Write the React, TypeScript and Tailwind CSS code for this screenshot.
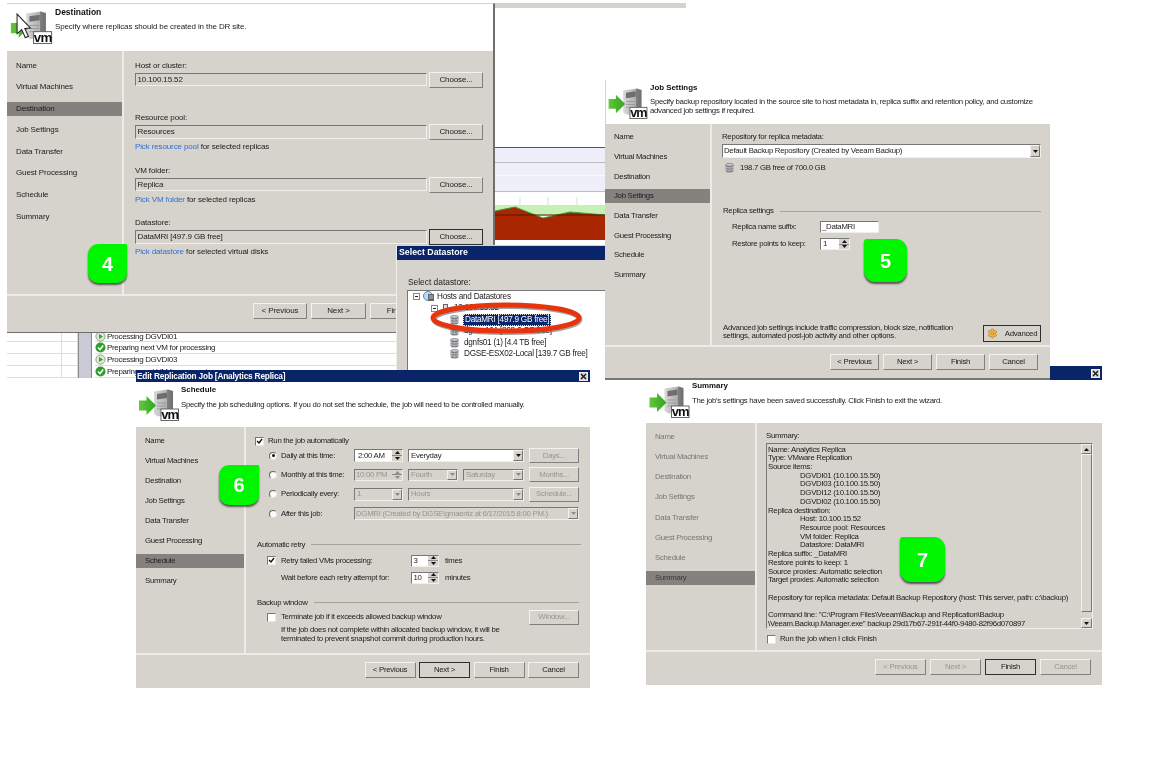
import React from "react";
import { Settings } from "lucide-react";

const NAV = ["Name", "Virtual Machines", "Destination", "Job Settings", "Data Transfer", "Guest Processing", "Schedule", "Summary"];

function VmIcon({ w, h, cursor }: { w: number; h: number; cursor?: boolean }) {
  return (
    <svg width={w} height={h} viewBox="0 0 40 33" className="shrink-0">
      <defs>
        <linearGradient id="srv" x1="0" x2="1" y1="0" y2="0">
          <stop offset="0" stopColor="#d8d8d8" />
          <stop offset="0.68" stopColor="#b0b0b0" />
          <stop offset="0.7" stopColor="#808080" />
          <stop offset="1" stopColor="#6e6e6e" />
        </linearGradient>
        <linearGradient id="arr" x1="0" x2="1" y1="0" y2="0">
          <stop offset="0" stopColor="#63c73c" />
          <stop offset="1" stopColor="#2fa61e" />
        </linearGradient>
      </defs>
      <path d="M15 3.5 L29 1.5 L34 3 V26 L19 28.5 L15 26z" fill="url(#srv)" />
      <path d="M18 6 L28 4.5 V10 L18 11.5z" fill="#6e6e6e" />
      <path d="M18 15h9M18 18h9M18 21h9" stroke="#8f8f8f" strokeWidth="0.8" />
      <path d="M0 12.5h7.5V8L17 17.5 7.5 27v-4.5H0z" fill="url(#arr)" />
      <rect x="22" y="21" width="17.5" height="11.5" fill="#fff" stroke="#666" strokeWidth="1" />
      <text x="30.8" y="30.6" textAnchor="middle" fontSize="13" fontWeight="700" fontFamily="Liberation Sans" fill="#111" letterSpacing="-0.8">vm</text>
      {cursor && (
        <path d="M6 4 L6 23 L10.5 19 L14 27 L17 25.5 L13.5 18 L19 17.5z" fill="#fff" stroke="#222" strokeWidth="1" />
      )}
    </svg>
  );
}

function Db({ className }: { className?: string }) {
  return (
    <svg width="9" height="10" viewBox="0 0 9 10" className={className}>
      <rect x="0.5" y="1" width="8" height="8.5" rx="2" fill="#8d9296" />
      <ellipse cx="4.5" cy="1.8" rx="4" ry="1.4" fill="#c8ccd0" stroke="#555" strokeWidth="0.5" />
      <path d="M1 4.2c2 1 5 1 7 0M1 6.6c2 1 5 1 7 0" stroke="#eee" strokeWidth="0.7" fill="none" />
      <path d="M3 3v6M6 3v6" stroke="#5a5f63" strokeWidth="0.5" />
    </svg>
  );
}

function Btn({ children, w, h, primary, disabled, className }: { children: React.ReactNode; w: string; h: string; primary?: boolean; disabled?: boolean; className?: string }) {
  return (
    <div
      className={`flex items-center justify-center shrink-0 whitespace-nowrap ${w} ${h} ${className ?? ""} ${
        primary
          ? "border-[1.5px] border-[#2f2f2f]"
          : "border-[1.5px] border-t-[#f4f2ee] border-l-[#f4f2ee] border-r-[#7f7f7f] border-b-[#7f7f7f]"
      } ${disabled ? "text-[#98958f]" : "text-[#1c1c1c]"}`}
    >
      {children}
    </div>
  );
}

function Nav({ active, w, pt, gap, dim }: { active: string; w: string; pt: string; gap: string; dim?: boolean }) {
  return (
    <div className={`shrink-0 flex flex-col border-r-2 border-[#ecebe7] ${w} ${pt} ${gap}`}>
      {NAV.map((n) => (
        <div
          key={n}
          className={`h-[14px] flex items-center pl-[9px] ${n === active ? "bg-[#84817f]" : ""} ${dim && n !== active ? "text-[#7a7774]" : dim ? "text-[#3a3a3a]" : "text-[#1c1c1c]"}`}
        >
          {n}
        </div>
      ))}
    </div>
  );
}

function Header({ h, title, desc, mt, pt, iw, ih, cursor, gap, ts, className }: { h: string; title: string; desc: React.ReactNode; mt: string; pt: string; iw: number; ih: number; cursor?: boolean; gap: string; ts: string; className?: string }) {
  return (
    <div className={`bg-white flex shrink-0 ${h} ${className ?? ""}`}>
      <div className={`ml-[3px] ${mt}`}>
        <VmIcon w={iw} h={ih} cursor={cursor} />
      </div>
      <div className={`ml-[2px] ${pt}`}>
        <div className={`font-bold h-[10px] leading-[10px] text-[#111] tracking-normal ${ts}`}>{title}</div>
        <div className={`leading-[8.7px] text-[#1c1c1c] whitespace-nowrap ${gap}`}>{desc}</div>
      </div>
    </div>
  );
}

function Inset({ className, children }: { className?: string; children?: React.ReactNode }) {
  return (
    <div className={`border-[1.5px] border-t-[#777] border-l-[#777] border-r-[#f0efeb] border-b-[#f0efeb] flex items-center shrink-0 overflow-hidden whitespace-nowrap ${className ?? ""}`}>
      {children}
    </div>
  );
}

function Arrow({ up, dim }: { up?: boolean; dim?: boolean }) {
  return (
    <svg width="5" height="3" viewBox="0 0 5 3">
      <path d={up ? "M2.5 0L5 3H0z" : "M0 0h5L2.5 3z"} fill={dim ? "#8a8a8a" : "#111"} />
    </svg>
  );
}

function Spin({ dim }: { dim?: boolean }) {
  return (
    <div className="ml-auto w-[10px] h-full flex flex-col shrink-0 bg-[#d6d2cc]">
      <div className="flex-1 flex items-center justify-center border-b border-[#888]"><Arrow up dim={dim} /></div>
      <div className="flex-1 flex items-center justify-center"><Arrow dim={dim} /></div>
    </div>
  );
}

function Drop({ dim }: { dim?: boolean }) {
  return (
    <div className="ml-auto w-[10px] h-full flex items-center justify-center shrink-0 bg-[#d6d2cc] border border-t-[#f4f2ee] border-l-[#f4f2ee] border-r-[#777] border-b-[#777]">
      <Arrow dim={dim} />
    </div>
  );
}

function Check({ on, className }: { on?: boolean; className?: string }) {
  return (
    <div className={`w-[9px] h-[9px] bg-white border-[1.5px] border-t-[#777] border-l-[#777] border-r-[#e8e6e2] border-b-[#e8e6e2] shrink-0 ${className ?? ""}`}>
      {on && (
        <svg viewBox="0 0 7 7" className="w-full h-full">
          <path d="M1 3l2 2 3-4" stroke="#111" strokeWidth="1.4" fill="none" />
        </svg>
      )}
    </div>
  );
}

function Radio({ on }: { on?: boolean }) {
  return (
    <div className="w-[8px] h-[8px] rounded-full bg-[#fbfbfb] border border-t-[#666] border-l-[#666] border-r-[#e8e6e2] border-b-[#e8e6e2] flex items-center justify-center shrink-0 mr-[4px]">
      {on && <div className="w-[3px] h-[3px] rounded-full bg-[#111]" />}
    </div>
  );
}

function Field({ label, value, link, rest, primary }: { label: string; value: string; link?: string; rest?: string; primary?: boolean }) {
  return (
    <div className="h-[52.5px]">
      <div className="h-[13px] leading-[13px]">{label}</div>
      <div className="flex items-center gap-[2px]">
        <Inset className="w-[292px] h-[13.5px] pl-[1.5px]">{value}</Inset>
        <Btn w="w-[54px]" h="h-[16px]" primary={primary}>Choose...</Btn>
      </div>
      {link && (
        <div className="mt-[2px] h-[10px] leading-[10px] whitespace-nowrap">
          <span className="text-[#2f6fd8]">{link}</span> {rest}
        </div>
      )}
    </div>
  );
}

function Badge({ n, className }: { n: string; className: string }) {
  return (
    <div className={`absolute bg-[#00f500] text-white font-bold text-[20px] tracking-normal flex items-center justify-center shadow-[0_2px_2px_rgba(0,0,0,0.6)] ${className}`}>
      {n}
    </div>
  );
}

function Footer({ h, pt, pr, gap, children }: { h: string; pt: string; pr: string; gap: string; children: React.ReactNode }) {
  return <div className={`flex justify-end border-t-2 border-[#ecebe7] shrink-0 ${h} ${pt} ${pr} ${gap}`}>{children}</div>;
}

function Section({ label, className }: { label: string; className: string }) {
  return (
    <div className={`flex items-center h-[12px] gap-[6px] whitespace-nowrap ${className}`}>
      <span>{label}</span>
      <div className="flex-1 h-px bg-[#a5a29d]" />
    </div>
  );
}

function Close({ className }: { className?: string }) {
  return (
    <div className={`w-[9px] h-[9px] bg-[#d6d2cc] border border-[#eee] flex items-center justify-center ${className ?? ""}`}>
      <svg viewBox="0 0 7 7" className="w-[7px] h-[7px]">
        <path d="M1 1l5 5M6 1L1 6" stroke="#111" strokeWidth="1.2" />
      </svg>
    </div>
  );
}

function LogIcon({ ok }: { ok?: boolean }) {
  return (
    <svg width="11" height="11" viewBox="0 0 11 11" className="shrink-0 mr-[1px]">
      {ok ? (
        <>
          <circle cx="5.5" cy="5.5" r="5" fill="#2e9e2e" />
          <path d="M3 5.5l2 2 3.2-4" stroke="#fff" strokeWidth="1.6" fill="none" />
        </>
      ) : (
        <>
          <circle cx="5.5" cy="5.5" r="4.6" fill="#dfe7d6" stroke="#8aa884" />
          <path d="M4 3l4 2.5L4 8z" fill="#3f9e35" />
        </>
      )}
    </svg>
  );
}

function MinusBox() {
  return (
    <div className="w-[7px] h-[7px] border border-[#888] bg-white flex items-center justify-center shrink-0">
      <div className="w-[3px] h-px bg-[#222]" />
    </div>
  );
}

function TreeRow({ pl, children }: { pl: string; children: React.ReactNode }) {
  return <div className={`h-[11.5px] flex items-center whitespace-nowrap ${pl}`}>{children}</div>;
}

function GridCol({ className }: { className: string }) {
  return (
    <div className={`flex flex-col shrink-0 ${className}`}>
      <div className="h-[10px] border-b border-[#ddd]" />
      <div className="h-[12px] border-b border-[#ddd]" />
      <div className="h-[12px] border-b border-[#ddd]" />
      <div className="h-[12px] border-b border-[#ddd]" />
    </div>
  );
}

const SUMMARY: [string, boolean][] = [
  ["Name: Analytics Replica", false],
  ["Type: VMware Replication", false],
  ["Source items:", false],
  ["DGVDI01 (10.100.15.50)", true],
  ["DGVDI03 (10.100.15.50)", true],
  ["DGVDI12 (10.100.15.50)", true],
  ["DGVDI02 (10.100.15.50)", true],
  ["Replica destination:", false],
  ["Host: 10.100.15.52", true],
  ["Resource pool: Resources", true],
  ["VM folder: Replica", true],
  ["Datastore: DataMRI", true],
  ["Replica suffix: _DataMRI", false],
  ["Restore points to keep: 1", false],
  ["Source proxies: Automatic selection", false],
  ["Target proxies: Automatic selection", false],
  ["\u00a0", false],
  ["Repository for replica metadata: Default Backup Repository (host: This server, path: c:\\backup)", false],
  ["\u00a0", false],
  ["Command line: \"C:\\Program Files\\Veeam\\Backup and Replication\\Backup", false],
  ["\\Veeam.Backup.Manager.exe\" backup 29d17b67-291f-44f0-9480-82f96d070897", false],
];

export default function App() {
  return (
    <div className="relative w-[1153px] h-[779px] bg-white overflow-hidden font-['Liberation_Sans',sans-serif] text-[8.4px] text-[#1c1c1c] blur-[0.4px]">
      {/* strip of a window behind everything */}
      <div className="absolute left-[495px] top-[3px] w-[191px] h-[5px] bg-[#d6d2cc]" />

      {/* chart of the window behind */}
      <svg className="absolute left-[495px] top-[147px]" width="110" height="96" viewBox="0 0 110 96">
        <rect width="110" height="44" fill="#eeeff8" />
        <rect width="110" height="1" fill="#555" />
        <rect y="15" width="110" height="1" fill="#bbbbbb" />
        <rect y="28" width="110" height="1" fill="#fafafa" />
        <rect y="44" width="110" height="1" fill="#bcbdc6" />
        <rect y="50" width="110" height="17" fill="#fff" />
        <path d="M25 50v17M53 50v17M82 50v17" stroke="#e4f5dc" strokeWidth="2" />
        <rect y="58" width="110" height="11" fill="#c7f0b6" />
        <path d="M0 64 L20 60 L48 71 L75 65 L110 68 V93 H0z" fill="#a82700" />
        <path d="M0 64 L20 60 L48 71 L75 65 L110 68" stroke="#3aa040" strokeWidth="1" fill="none" />
        <rect y="67.5" width="110" height="1" fill="#5c1400" />
      </svg>

      {/* log table behind */}
      <div className="absolute left-[7px] top-[332px] w-[389px] h-[46px] flex overflow-hidden">
        <GridCol className="w-[55px] border-r border-[#ddd]" />
        <GridCol className="w-[16px] border-r border-[#ddd]" />
        <div className="w-[13px] shrink-0 bg-[#c9cad6] border-l border-[#888]" />
        <div className="flex-1 flex flex-col border-l border-[#888] text-[8px] tracking-[-0.33px] text-[#222] pl-[3px] whitespace-nowrap">
          <div className="h-[10px] flex items-center border-b border-[#ddd]"><LogIcon />Processing DGVDI01</div>
          <div className="h-[12px] flex items-center border-b border-[#ddd]"><LogIcon ok />Preparing next VM for processing</div>
          <div className="h-[12px] flex items-center border-b border-[#ddd]"><LogIcon />Processing DGVDI03</div>
          <div className="h-[12px] flex items-center border-b border-[#ddd]"><LogIcon ok />Preparing next VM for processing</div>
        </div>
      </div>

      {/* step 4 */}
      <div className="absolute left-[7px] top-[3px] w-[488px] h-[330px] flex flex-col bg-[#d6d2cc] border-t border-[#d6d2cc] border-r-2 border-r-[#6f6f6f] border-b border-b-[#6f6f6f] text-[8px] tracking-[-0.125px]">
        <Header h="h-[47px]" title="Destination" ts="text-[8.5px]" desc="Specify where replicas should be created in the DR site." mt="mt-[6px]" pt="pt-[3px]" iw={43} ih={34} cursor gap="mt-[5.5px]" />
        <div className="flex flex-1 min-h-0">
          <Nav active="Destination" w="w-[117px]" pt="pt-[7.5px]" gap="gap-[7.6px]" />
          <div className="pl-[11px] pt-[7.5px] flex-1">
            <Field label="Host or cluster:" value="10.100.15.52" />
            <Field label="Resource pool:" value="Resources" link="Pick resource pool" rest="for selected replicas" />
            <Field label="VM folder:" value="Replica" link="Pick VM folder" rest="for selected replicas" />
            <Field label="Datastore:" value="DataMRI [497.9 GB free]" link="Pick datastore" rest="for selected virtual disks" primary />
          </div>
        </div>
        <Footer h="h-[38px]" pt="pt-[7px]" pr="pr-[11px]" gap="gap-[4px]">
          <Btn w="w-[54px]" h="h-[16px]">&lt; Previous</Btn>
          <Btn w="w-[55px]" h="h-[16px]">Next &gt;</Btn>
          <Btn w="w-[54px]" h="h-[16px]">Finish</Btn>
          <Btn w="w-[54px]" h="h-[16px]">Cancel</Btn>
        </Footer>
        <Badge n="4" className="left-[81px] top-[240px] w-[39px] h-[39px] rounded-tl-[10px] rounded-bl-[10px] rounded-br-[10px] rounded-tr-[1px]" />
      </div>

      {/* select datastore */}
      <div className="absolute left-[396px] top-[245px] w-[209px] h-[133px] bg-[#d6d2cc] border-l border-[#f0efeb] flex flex-col">
        <div className="h-[15px] bg-[#0a246a] text-white font-bold text-[8.8px] flex items-center pl-[2px] shrink-0 border-t border-[#d6d2cc]">Select Datastore</div>
        <div className="mt-[16px] h-[12px] leading-[12px] pl-[11px]">Select datastore:</div>
        <div className="mt-[2px] ml-[10px] flex-1 bg-white border-[1.5px] border-r-0 border-b-0 border-t-[#777] border-l-[#777] overflow-hidden pl-[5px] text-[#1c1c1c] text-[8.2px] tracking-[-0.25px]">
          <TreeRow pl="pl-0">
            <MinusBox />
            <svg width="12" height="11" viewBox="0 0 12 11" className="ml-[3px] mr-[2px] shrink-0">
              <circle cx="5" cy="5" r="4.5" fill="#bcd9f2" stroke="#4f8ac0" />
              <rect x="5" y="3" width="6" height="7" fill="#666" />
              <path d="M6 5h4M6 7h4" stroke="#ddd" strokeWidth="0.7" />
            </svg>
            Hosts and Datastores
          </TreeRow>
          <TreeRow pl="pl-[18px]">
            <MinusBox />
            <div className="w-[5px] h-[9px] bg-[#ddd] border border-[#666] ml-[5px] mr-[6px] shrink-0" />
            10.100.15.52
          </TreeRow>
          <TreeRow pl="pl-[37px]">
            <Db className="mr-[4px] shrink-0" />
            <span className="bg-[#0a246a] text-white px-[1px] border border-dotted border-[#ddd] leading-[10px]">DataMRI [497.9 GB free]</span>
          </TreeRow>
          <TreeRow pl="pl-[37px]">
            <Db className="mr-[5px] shrink-0" />
            dgnas101 [868.6 GB free]
          </TreeRow>
          <TreeRow pl="pl-[37px]">
            <Db className="mr-[5px] shrink-0" />
            dgnfs01 (1) [4.4 TB free]
          </TreeRow>
          <TreeRow pl="pl-[37px]">
            <Db className="mr-[5px] shrink-0" />
            DGSE-ESX02-Local [139.7 GB free]
          </TreeRow>
        </div>
      </div>

      {/* red ellipse over the selected datastore */}
      <svg className="absolute left-[428px] top-[298px]" width="158" height="40" viewBox="0 0 158 40">
        <ellipse cx="79" cy="21.5" rx="73" ry="13" fill="none" stroke="#555" strokeOpacity="0.55" strokeWidth="5" />
        <ellipse cx="78" cy="20" rx="73" ry="13" fill="none" stroke="#e8340c" strokeWidth="5" />
      </svg>

      {/* step 5 */}
      <div className="absolute left-[605px] top-[80px] w-[445px] h-[300px] flex flex-col bg-[#d6d2cc] border-b-2 border-[#777] text-[7.8px] tracking-[-0.28px]">
        <Header
          h="h-[44px]"
          title="Job Settings"
          ts="text-[7.9px]"
          className="shadow-[inset_1px_0_0_#d4d4d4]"
          desc={<>Specify backup repository located in the source site to host metadata in, replica suffix and retention policy, and customize<br />advanced job settings if required.</>}
          mt="mt-[7px]"
          pt="pt-[3px]"
          iw={40}
          ih={32}
          gap="mt-[5px]"
        />
        <div className="flex flex-1 min-h-0">
          <Nav active="Job Settings" w="w-[107px]" pt="pt-[6px]" gap="gap-[5.7px]" />
          <div className="flex-1 min-w-0 flex flex-col pl-[10px] pr-[9px] pt-[7px] pb-[3px]">
            <div className="h-[12px] leading-[12px]">Repository for replica metadata:</div>
            <Inset className="mt-[1px] h-[14px] bg-white pl-[1px]">
              Default Backup Repository (Created by Veeam Backup)
              <Drop />
            </Inset>
            <div className="mt-[4px] h-[12px] flex items-center pl-[3px]">
              <Db className="mr-[6px]" />
              198.7 GB free of 700.0 GB
            </div>
            <Section label="Replica settings" className="mt-[31px] pl-[1px]" />
            <div className="mt-[4px] h-[12px] flex items-center pl-[10px]">
              <div className="w-[88px]">Replica name suffix:</div>
              <Inset className="w-[59px] h-[12px] bg-white pl-[1px]">_DataMRI</Inset>
            </div>
            <div className="mt-[5px] h-[12px] flex items-center pl-[10px]">
              <div className="w-[88px]">Restore points to keep:</div>
              <Inset className="w-[30px] h-[12px] bg-white pl-[2px]">1<Spin /></Inset>
            </div>
            <div className="mt-auto h-[17px] flex items-end justify-between pl-[1px]">
              <div className="leading-[8.7px] mb-[1px] whitespace-nowrap">
                Advanced job settings include traffic compression, block size, notification<br />
                settings, automated post-job activity and other options.
              </div>
              <Btn w="w-[58px]" h="h-[17px]" primary className="gap-[7px]">
                <Settings size={11} className="text-[#c9862a] fill-[#f5b94a]" />
                Advanced
              </Btn>
            </div>
          </div>
        </div>
        <Footer h="h-[33px]" pt="pt-[7px]" pr="pr-[12px]" gap="gap-[4px]">
          <Btn w="w-[49px]" h="h-[15.5px]">&lt; Previous</Btn>
          <Btn w="w-[49px]" h="h-[15.5px]">Next &gt;</Btn>
          <Btn w="w-[49px]" h="h-[15.5px]">Finish</Btn>
          <Btn w="w-[49px]" h="h-[15.5px]">Cancel</Btn>
        </Footer>
        <Badge n="5" className="left-[259px] top-[159px] w-[43px] h-[43px] rounded-tl-[3px] rounded-tr-[11px] rounded-bl-[11px] rounded-br-[11px]" />
      </div>

      {/* title bar of a window under step 7 */}
      <div className="absolute left-[1050px] top-[366px] w-[52px] h-[14px] bg-[#0a246a] flex items-center justify-end pr-[2px]">
        <Close />
      </div>

      {/* step 6 */}
      <div className="absolute left-[136px] top-[370px] w-[454px] h-[318px] flex flex-col bg-[#d6d2cc] text-[7.8px] tracking-[-0.28px]">
        <div className="h-[12px] bg-[#0a246a] text-white font-bold text-[8.3px] tracking-[-0.2px] flex items-center justify-between pl-[1px] pr-[2px] shrink-0">
          <span>Edit Replication Job [Analytics Replica]</span>
          <Close />
        </div>
        <Header h="h-[45px]" title="Schedule" ts="text-[7.9px]" desc="Specify the job scheduling options. If you do not set the schedule, the job will need to be controlled manually." mt="mt-[6px]" pt="pt-[3px]" iw={40} ih={33} gap="mt-[5.5px]" />
        <div className="flex flex-1 min-h-0">
          <Nav active="Schedule" w="w-[110px]" pt="pt-[6.5px]" gap="gap-[6px]" />
          <div className="flex-1 min-w-0 flex flex-col pt-[8px] pr-[11px] whitespace-nowrap">
            <div className="h-[12px] flex items-center pl-[9px]">
              <Check on className="mr-[4px]" />
              Run the job automatically
            </div>
            <div className="mt-[1px] flex flex-col gap-[4.4px] pl-[23px]">
              <div className="h-[15px] flex items-center">
                <Radio on />
                <div className="w-[73px]">Daily at this time:</div>
                <Inset className="w-[49px] h-[12.5px] bg-white pl-[3px]">2:00 AM<Spin /></Inset>
                <Inset className="ml-[5px] w-[116px] h-[12.5px] bg-white pl-[2px]">Everyday<Drop /></Inset>
                <Btn w="w-[50px]" h="h-[15px]" disabled className="ml-[5px]">Days...</Btn>
              </div>
              <div className="h-[15px] flex items-center">
                <Radio />
                <div className="w-[73px]">Monthly at this time:</div>
                <Inset className="w-[49px] h-[12.5px] pl-[1px] text-[#98958f]">10:00 PM<Spin dim /></Inset>
                <Inset className="ml-[5px] w-[50px] h-[12.5px] pl-[2px] text-[#98958f]">Fourth<Drop dim /></Inset>
                <Inset className="ml-[5px] w-[61px] h-[12.5px] pl-[2px] text-[#98958f]">Saturday<Drop dim /></Inset>
                <Btn w="w-[50px]" h="h-[15px]" disabled className="ml-[5px]">Months...</Btn>
              </div>
              <div className="h-[15px] flex items-center">
                <Radio />
                <div className="w-[73px]">Periodically every:</div>
                <Inset className="w-[49px] h-[12.5px] pl-[2px] text-[#98958f]">1<Drop dim /></Inset>
                <Inset className="ml-[5px] w-[116px] h-[12.5px] pl-[2px] text-[#98958f]">Hours<Drop dim /></Inset>
                <Btn w="w-[50px]" h="h-[15px]" disabled className="ml-[5px]">Schedule...</Btn>
              </div>
              <div className="h-[15px] flex items-center">
                <Radio />
                <div className="w-[73px]">After this job:</div>
                <Inset className="w-[225px] h-[12.5px] pl-[1px] text-[#98958f]">DGMRI (Created by DGSE\gmaentz at 6/17/2015 8:00 PM.)<Drop dim /></Inset>
              </div>
            </div>
            <Section label="Automatic retry" className="mt-[17.5px] pl-[11px] mr-[-2px]" />
            <div className="mt-[4px] h-[12px] flex items-center pl-[21px]">
              <Check on className="mr-[5px]" />
              <div className="w-[130px]">Retry failed VMs processing:</div>
              <Inset className="w-[28px] h-[12px] bg-white pl-[1.5px]">3<Spin /></Inset>
              <span className="ml-[6px]">times</span>
            </div>
            <div className="mt-[5px] h-[12px] flex items-center pl-[35px]">
              <div className="w-[130px]">Wait before each retry attempt for:</div>
              <Inset className="w-[28px] h-[12px] bg-white pl-[1.5px]">10<Spin /></Inset>
              <span className="ml-[6px]">minutes</span>
            </div>
            <Section label="Backup window" className="mt-[13px] pl-[11px]" />
            <div className="mt-[1px] h-[15px] flex items-center pl-[21px]">
              <Check className="mr-[5px]" />
              Terminate job if it exceeds allowed backup window
              <Btn w="w-[50px]" h="h-[15px]" disabled className="ml-auto">Window...</Btn>
            </div>
            <div className="mt-[0.5px] pl-[35px] leading-[9px]">
              If the job does not complete within allocated backup window, it will be<br />
              terminated to prevent snapshot commit during production hours.
            </div>
          </div>
        </div>
        <Footer h="h-[35px]" pt="pt-[7px]" pr="pr-[11px]" gap="gap-[3.5px]">
          <Btn w="w-[51px]" h="h-[15.5px]">&lt; Previous</Btn>
          <Btn w="w-[51px]" h="h-[15.5px]" primary>Next &gt;</Btn>
          <Btn w="w-[51px]" h="h-[15.5px]">Finish</Btn>
          <Btn w="w-[51px]" h="h-[15.5px]">Cancel</Btn>
        </Footer>
        <Badge n="6" className="left-[83px] top-[95px] w-[40px] h-[40px] rounded-tl-[10px] rounded-bl-[10px] rounded-br-[10px] rounded-tr-[1px]" />
      </div>

      {/* step 7 */}
      <div className="absolute left-[646px] top-[380px] w-[456px] h-[305px] flex flex-col bg-[#d6d2cc] text-[7.8px] tracking-[-0.28px]">
        <Header h="h-[43px]" title="Summary" ts="text-[7.9px]" desc="The job's settings have been saved successfully. Click Finish to exit the wizard." mt="mt-[5px]" pt="pt-[1px]" iw={41} ih={33} gap="mt-[5.5px]" />
        <div className="flex flex-1 min-h-0">
          <Nav active="Summary" w="w-[111px]" pt="pt-[7px]" gap="gap-[6.1px]" dim />
          <div className="flex-1 min-w-0 flex flex-col pt-[7px] pl-[9px]">
            <div className="h-[13px] leading-[12px]">Summary:</div>
            <Inset className="w-[327px] h-[186px] items-stretch">
              <div className="flex-1 min-w-0 pl-[1px] pt-[1.5px] leading-[8.72px] whitespace-nowrap overflow-hidden">
                {SUMMARY.map(([t, indented], i) => (
                  <div key={i} className={indented ? "pl-[32px]" : ""}>{t}</div>
                ))}
              </div>
              <div className="w-[11px] flex flex-col shrink-0">
                <div className="h-[10px] flex items-center justify-center border-[1px] border-t-[#f4f2ee] border-l-[#f4f2ee] border-r-[#777] border-b-[#777]"><Arrow up /></div>
                <div className="flex-1 border-[1px] border-t-[#f4f2ee] border-l-[#f4f2ee] border-r-[#777] border-b-[#777] mb-[6px]" />
                <div className="h-[10px] flex items-center justify-center border-[1px] border-t-[#f4f2ee] border-l-[#f4f2ee] border-r-[#777] border-b-[#777]"><Arrow /></div>
              </div>
            </Inset>
            <div className="mt-[4px] h-[12px] flex items-center pl-[1px] whitespace-nowrap">
              <Check className="mr-[4px]" />
              Run the job when I click Finish
            </div>
          </div>
        </div>
        <Footer h="h-[35px]" pt="pt-[7px]" pr="pr-[11px]" gap="gap-[4px]">
          <Btn w="w-[51px]" h="h-[15.5px]" disabled>&lt; Previous</Btn>
          <Btn w="w-[51px]" h="h-[15.5px]" disabled>Next &gt;</Btn>
          <Btn w="w-[51px]" h="h-[15.5px]" primary>Finish</Btn>
          <Btn w="w-[51px]" h="h-[15.5px]" disabled>Cancel</Btn>
        </Footer>
        <Badge n="7" className="left-[254px] top-[157px] w-[45px] h-[45px] rounded-tl-[3px] rounded-tr-[11px] rounded-bl-[11px] rounded-br-[11px]" />
      </div>
    </div>
  );
}
